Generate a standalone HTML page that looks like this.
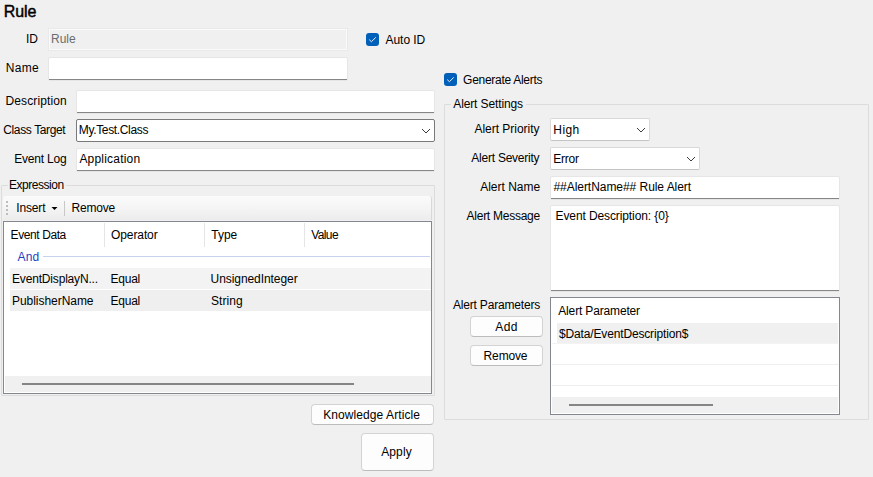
<!DOCTYPE html>
<html><head><meta charset="utf-8">
<style>
*{box-sizing:border-box;margin:0;padding:0}
html,body{width:873px;height:477px;overflow:hidden;background:#f0f0f0}
body{font-family:"Liberation Sans",sans-serif;font-size:12px;color:#000;position:relative}
.t{position:absolute;white-space:nowrap;line-height:14px}
.r{position:absolute}
</style></head><body>
<div class="r" style="left:48px;top:28px;width:300px;height:23px;border:1px solid #e9e9e9;background:#f0f0f0"></div>
<div class="r" style="left:49px;top:29px;width:298px;height:21px;border:1px solid #fafafa"></div>
<div class="r" style="left:48px;top:57px;width:300px;height:24px;border:1px solid #e6e6e6;background:#fff;border-radius:2px"></div>
<div class="r" style="left:49px;top:79px;width:298px;height:1px;background:#868686"></div>
<div class="r" style="left:76px;top:90px;width:359px;height:24px;border:1px solid #e6e6e6;background:#fff;border-radius:2px"></div>
<div class="r" style="left:77px;top:112px;width:357px;height:1px;background:#868686"></div>
<div class="r" style="left:76px;top:148px;width:359px;height:24px;border:1px solid #e6e6e6;background:#fff;border-radius:2px"></div>
<div class="r" style="left:77px;top:170px;width:357px;height:1px;background:#868686"></div>
<div class="r" style="left:550px;top:176px;width:290px;height:24px;border:1px solid #e6e6e6;background:#fff;border-radius:2px"></div>
<div class="r" style="left:551px;top:198px;width:288px;height:1px;background:#868686"></div>
<div class="r" style="left:550px;top:205px;width:290px;height:87px;border:1px solid #e6e6e6;background:#fff;border-radius:2px"></div>
<div class="r" style="left:551px;top:290px;width:288px;height:1px;background:#868686"></div>
<div class="r" style="left:76px;top:119px;width:359px;height:23px;border:1px solid #7a7a7a;background:#fff;border-radius:2px"></div>
<svg class="r" style="left:420px;top:127px" width="12" height="8"><path d="M2 2 L6 6 L10 2" fill="none" stroke="#3c3c3c" stroke-width="1"/></svg>
<div class="r" style="left:550px;top:118px;width:100px;height:23px;border:1px solid #d9d9d9;border-bottom-color:#c4c4c4;background:#fff;border-radius:2px"></div>
<svg class="r" style="left:636px;top:126px" width="10" height="7"><path d="M1 2 L5 6 L9 2" fill="none" stroke="#3c3c3c" stroke-width="1"/></svg>
<div class="r" style="left:550px;top:147px;width:150px;height:23px;border:1px solid #d9d9d9;border-bottom-color:#c4c4c4;background:#fff;border-radius:2px"></div>
<svg class="r" style="left:686px;top:155px" width="10" height="7"><path d="M1 2 L5 6 L9 2" fill="none" stroke="#3c3c3c" stroke-width="1"/></svg>
<div class="r" style="left:366px;top:33px;width:13px;height:13px;background:#005fb8;border-radius:3px"></div>
<svg class="r" style="left:366px;top:33px" width="13" height="13"><path d="M3.2 6.6 L5.4 8.7 L9.8 4.4" fill="none" stroke="#f4f8fc" stroke-width="0.95"/></svg>
<div class="r" style="left:444px;top:73px;width:13px;height:13px;background:#005fb8;border-radius:3px"></div>
<svg class="r" style="left:444px;top:73px" width="13" height="13"><path d="M3.2 6.6 L5.4 8.7 L9.8 4.4" fill="none" stroke="#f4f8fc" stroke-width="0.95"/></svg>
<div class="r" style="left:1px;top:185px;width:434px;height:211px;border:1px solid #dcdcdc;border-radius:1px"></div>
<div class="r" style="left:8px;top:180px;width:58px;height:10px;background:#f0f0f0"></div>
<div class="r" style="left:3px;top:196px;width:429px;height:24px;background:linear-gradient(#fbfbfb,#f3f3f3 60%,#ececec);border-radius:3px 3px 0 0;border-right:1px solid #d8d8d8"></div>
<div class="r" style="left:6px;top:201px;width:2px;height:2px;background:#bdbdbd"></div>
<div class="r" style="left:6px;top:205px;width:2px;height:2px;background:#bdbdbd"></div>
<div class="r" style="left:6px;top:209px;width:2px;height:2px;background:#bdbdbd"></div>
<div class="r" style="left:6px;top:213px;width:2px;height:2px;background:#bdbdbd"></div>
<svg class="r" style="left:51px;top:207px" width="7" height="4"><path d="M0.5 0 L6.5 0 L3.5 3 Z" fill="#000"/></svg>
<div class="r" style="left:64px;top:201px;width:1px;height:15px;background:#c8c8c8"></div>
<div class="r" style="left:3px;top:221px;width:429px;height:173px;border:1px solid #828790;background:#fff"></div>
<div class="r" style="left:104px;top:223px;width:1px;height:24px;background:#e5e5e5"></div>
<div class="r" style="left:204px;top:223px;width:1px;height:24px;background:#e5e5e5"></div>
<div class="r" style="left:304px;top:223px;width:1px;height:24px;background:#e5e5e5"></div>
<div class="r" style="left:43px;top:256px;width:387px;height:1px;background:#c6d2ee"></div>
<div class="r" style="left:10px;top:268px;width:421px;height:21px;background:#f3f3f3"></div>
<div class="r" style="left:10px;top:290px;width:421px;height:21px;background:#efefef"></div>
<div class="r" style="left:5px;top:376px;width:426px;height:16px;background:#f0f0f0"></div>
<div class="r" style="left:22px;top:383px;width:332px;height:2px;background:#858585"></div>
<div class="r" style="left:311px;top:404px;width:123px;height:21px;background:#fdfdfd;border:1px solid #d3d3d3;border-bottom-color:#bcbcbc;border-radius:4px"></div>
<div class="r" style="left:361px;top:433px;width:73px;height:38px;background:#fdfdfd;border:1px solid #d3d3d3;border-bottom-color:#bcbcbc;border-radius:4px"></div>
<div class="r" style="left:470px;top:316px;width:73px;height:21px;background:#fdfdfd;border:1px solid #d3d3d3;border-bottom-color:#bcbcbc;border-radius:4px"></div>
<div class="r" style="left:470px;top:345px;width:73px;height:21px;background:#fdfdfd;border:1px solid #d3d3d3;border-bottom-color:#bcbcbc;border-radius:4px"></div>
<div class="r" style="left:444px;top:104px;width:425px;height:316px;border:1px solid #dcdcdc;border-radius:1px"></div>
<div class="r" style="left:451px;top:98px;width:75px;height:10px;background:#f0f0f0"></div>
<div class="r" style="left:550px;top:297px;width:290px;height:118px;border:1px solid #828790;background:#fff"></div>
<div class="r" style="left:557px;top:323px;width:281px;height:20px;background:#f0f0f0"></div>
<div class="r" style="left:552px;top:343px;width:286px;height:1px;background:#f3f3f3"></div>
<div class="r" style="left:552px;top:364px;width:286px;height:1px;background:#eeeeee"></div>
<div class="r" style="left:552px;top:385px;width:286px;height:1px;background:#eeeeee"></div>
<div class="r" style="left:552px;top:397px;width:286px;height:16px;background:#f0f0f0"></div>
<div class="r" style="left:569px;top:404px;width:144px;height:2px;background:#858585"></div>
<div class="t" style="left:3.69px;top:3.00px;letter-spacing:-0.094px;font-size:16px;line-height:18px;-webkit-text-stroke:0.45px #000">Rule</div>
<div class="t" style="left:26.09px;top:32.00px;letter-spacing:-0.118px">ID</div>
<div class="t" style="left:51.02px;top:32.00px;color:#6d6d6d">Rule</div>
<div class="t" style="left:385.58px;top:33.00px;letter-spacing:-0.070px">Auto ID</div>
<div class="t" style="left:5.82px;top:61.00px;letter-spacing:0.303px">Name</div>
<div class="t" style="left:5.52px;top:94.00px;letter-spacing:0.114px">Description</div>
<div class="t" style="left:3.29px;top:123.00px;letter-spacing:-0.375px">Class Target</div>
<div class="t" style="left:78.82px;top:123.00px;letter-spacing:-0.349px">My.Test.Class</div>
<div class="t" style="left:14.22px;top:152.00px;letter-spacing:-0.210px">Event Log</div>
<div class="t" style="left:79.38px;top:152.00px;letter-spacing:0.210px">Application</div>
<div class="t" style="left:8.92px;top:178.00px;letter-spacing:-0.466px">Expression</div>
<div class="t" style="left:16.29px;top:201.00px;letter-spacing:-0.163px">Insert</div>
<div class="t" style="left:71.52px;top:201.00px;letter-spacing:-0.193px">Remove</div>
<div class="t" style="left:10.62px;top:228.00px;letter-spacing:-0.409px">Event Data</div>
<div class="t" style="left:111.03px;top:228.00px;letter-spacing:-0.098px">Operator</div>
<div class="t" style="left:211.23px;top:228.00px">Type</div>
<div class="t" style="left:311.15px;top:228.00px;letter-spacing:-0.576px">Value</div>
<div class="t" style="left:17.58px;top:250.00px;letter-spacing:0.123px;color:#1c3fbf">And</div>
<div class="t" style="left:12.02px;top:272.00px;letter-spacing:-0.175px">EventDisplayN...</div>
<div class="t" style="left:110.62px;top:272.00px;letter-spacing:-0.276px">Equal</div>
<div class="t" style="left:210.57px;top:272.00px;letter-spacing:-0.067px">UnsignedInteger</div>
<div class="t" style="left:12.02px;top:294.00px;letter-spacing:-0.043px">PublisherName</div>
<div class="t" style="left:110.62px;top:294.00px;letter-spacing:-0.276px">Equal</div>
<div class="t" style="left:210.96px;top:294.00px;letter-spacing:0.054px">String</div>
<div class="t" style="left:323.22px;top:408.00px;letter-spacing:0.079px">Knowledge Article</div>
<div class="t" style="left:381.18px;top:445.00px;letter-spacing:0.132px">Apply</div>
<div class="t" style="left:463.10px;top:73.00px;letter-spacing:-0.286px">Generate Alerts</div>
<div class="t" style="left:453.28px;top:97.00px;letter-spacing:-0.124px">Alert Settings</div>
<div class="t" style="left:474.48px;top:122.00px;letter-spacing:-0.023px">Alert Priority</div>
<div class="t" style="left:553.32px;top:123.00px;letter-spacing:0.400px">High</div>
<div class="t" style="left:471.28px;top:151.00px;letter-spacing:-0.231px">Alert Severity</div>
<div class="t" style="left:553.32px;top:152.00px;letter-spacing:-0.246px">Error</div>
<div class="t" style="left:480.18px;top:180.00px">Alert Name</div>
<div class="t" style="left:553.45px;top:180.00px;letter-spacing:-0.046px">##AlertName## Rule Alert</div>
<div class="t" style="left:466.58px;top:209.00px;letter-spacing:-0.262px">Alert Message</div>
<div class="t" style="left:555.52px;top:209.00px;letter-spacing:-0.105px">Event Description: {0}</div>
<div class="t" style="left:452.98px;top:298.00px;letter-spacing:-0.185px">Alert Parameters</div>
<div class="t" style="left:495.28px;top:320.00px;letter-spacing:0.400px">Add</div>
<div class="t" style="left:483.62px;top:349.00px;letter-spacing:-0.153px">Remove</div>
<div class="t" style="left:558.28px;top:304.00px;letter-spacing:-0.158px">Alert Parameter</div>
<div class="t" style="left:559.07px;top:327.00px;letter-spacing:-0.155px">$Data/EventDescription$</div>
</body></html>
